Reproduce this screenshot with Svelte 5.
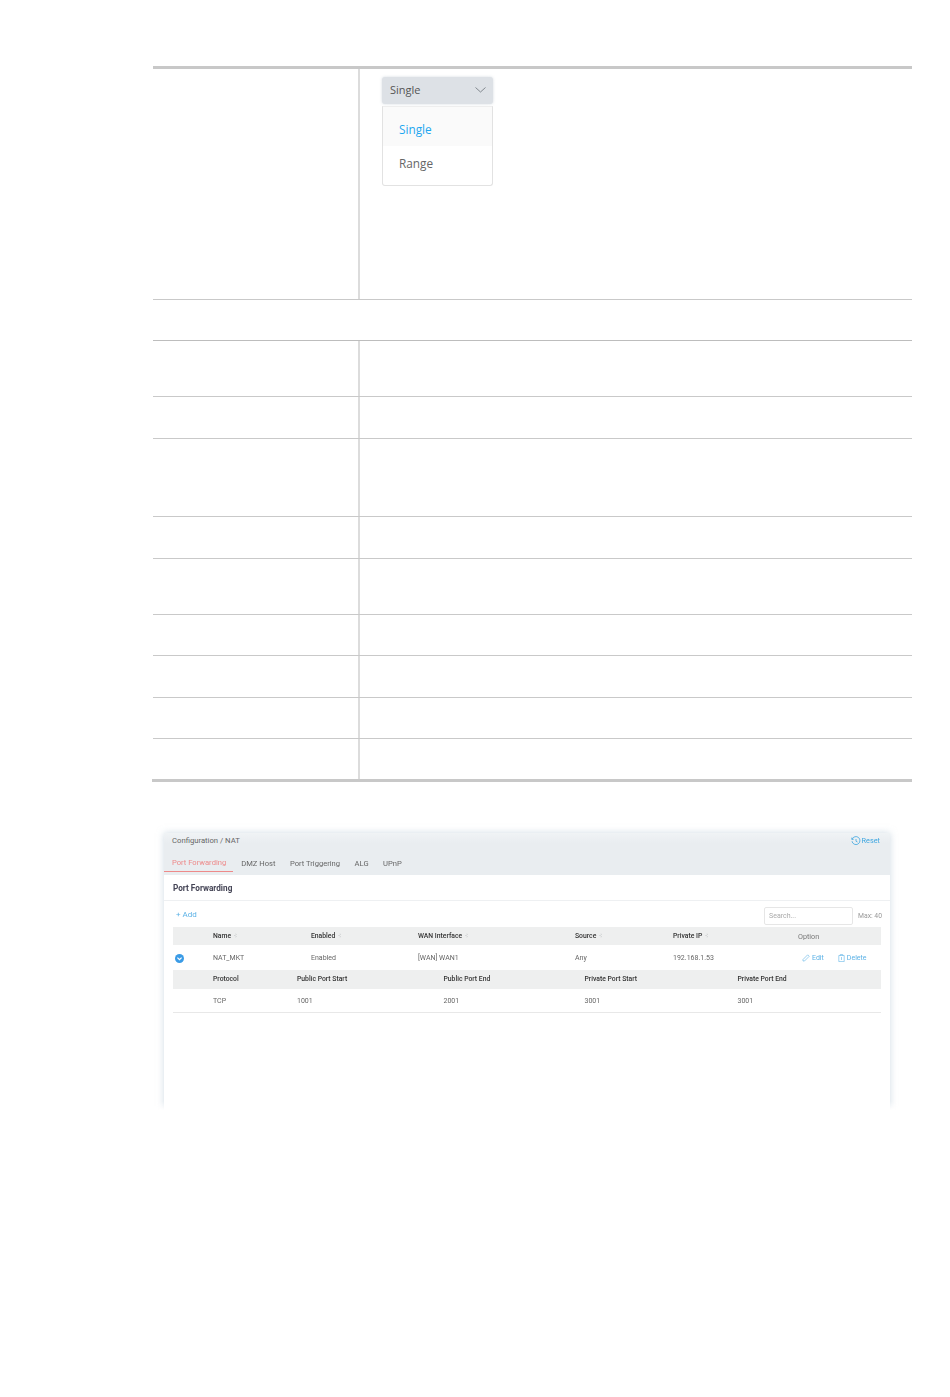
<script>
  const mainCols = [
    { key: 'name', label: 'Name', sort: true },
    { key: 'enabled', label: 'Enabled', sort: true },
    { key: 'wan', label: 'WAN Interface', sort: true },
    { key: 'source', label: 'Source', sort: true },
    { key: 'ip', label: 'Private IP', sort: true },
    { key: 'option', label: 'Option', sort: false }
  ];
  const rule = { name: 'NAT_MKT', enabled: 'Enabled', wan: '[WAN] WAN1', source: 'Any', ip: '192.168.1.53' };
  const subCols = ['Protocol', 'Public Port Start', 'Public Port End', 'Private Port Start', 'Private Port End'];
  const subRow = ['TCP', '1001', '2001', '3001', '3001'];
  const tabs = ['Port Forwarding', 'DMZ Host', 'Port Triggering', 'ALG', 'UPnP'];
  // heights of the empty rows below the spanning row
  const rows = [56, 42, 78, 42, 56, 41, 42, 41, 43];
</script>

<div class="page">
  <div class="doc-table">
    <div class="row first">
      <div class="label"></div>
      <div class="value">
        <div class="select">
          <span>Single</span>
          <svg width="11" height="6" viewBox="0 0 11 6"><path d="M.5.5l5 4.5 5-4.5" fill="none" stroke="#6b7278" stroke-width=".8" /></svg>
        </div>
        <div class="menu">
          <div class="opt active">Single</div>
          <div class="opt">Range</div>
        </div>
      </div>
    </div>
    <div class="span-row"></div>
    {#each rows as h, i}
      <div class="row" class:last={i === rows.length - 1} style="height: {h}px">
        <div class="label"></div>
        <div class="value"></div>
      </div>
    {/each}
  </div>

  <div class="shot">
    <div class="card">
      <div class="head">
        <div class="crumbs">
          <span>Configuration / NAT</span>
          <span class="reset">
            <svg width="10" height="10" viewBox="0 0 10 10" fill="none" stroke="#3ea6e0" stroke-width=".8"><path d="M1.2 3.2A4 4 0 1 1 1 5.2" /><path d="M.8 1.6v1.8h1.8" /><path d="M5 3v2.2l1.5.8" /></svg>
            Reset
          </span>
        </div>
        <div class="tabs">
          {#each tabs as t, i}
            <span class="tab" class:on={i === 0}>{t}</span>
          {/each}
        </div>
      </div>
      <div class="body">
        <div class="title">Port Forwarding</div>
        <div class="tools">
          <span class="add">+ Add</span>
          <div class="search-wrap">
            <div class="search">Search...</div>
            <span class="max">Max: 40</span>
          </div>
        </div>
        <div class="grid main th">
          <span></span>
          {#each mainCols as c}
            <span class:plain={!c.sort}>{c.label}{#if c.sort}<i class="sort"></i>{/if}</span>
          {/each}
          <span></span>
        </div>
        <div class="grid main td">
          <span class="toggle">
            <svg width="9" height="9" viewBox="0 0 9 9"><circle cx="4.5" cy="4.5" r="4.5" fill="#3a9be6" /><path d="M2.4 3.6l2.1 2 2.1-2" fill="none" stroke="#fff" stroke-width="1.2" /></svg>
          </span>
          <span>{rule.name}</span>
          <span>{rule.enabled}</span>
          <span>{rule.wan}</span>
          <span>{rule.source}</span>
          <span>{rule.ip}</span>
          <span class="actions">
            <span class="action">
              <svg width="8" height="8" viewBox="0 0 8 8" fill="none" stroke="#5cb2e6" stroke-width=".6"><path d="M1 5.5L5.7.8l1.5 1.5L2.5 7H1z" /></svg>Edit
            </span>
            <span class="action">
              <svg width="7" height="8" viewBox="0 0 7 8" fill="none" stroke="#5cb2e6" stroke-width=".6"><path d="M.8 1.5h5.4V7.6H.8zM2.3 1.5V.5h2.4v1M3.5 3v3" /></svg>Delete
            </span>
          </span>
          <span></span>
        </div>
        <div class="grid sub th">
          <span></span>
          {#each subCols as c}<span>{c}</span>{/each}
        </div>
        <div class="grid sub td bottom">
          <span></span>
          {#each subRow as v}<span>{v}</span>{/each}
        </div>
      </div>
    </div>
  </div>
</div>

<style>
  :global(body) {
    margin: 0;
    background: #fff;
  }

  .page {
    width: 950px;
    height: 1397px;
    box-sizing: border-box;
    padding: 66px 38px 0 153px;
    overflow: hidden;
    font-family: "Open Sans", sans-serif;
  }

  .doc-table {
    border-top: 3px solid #c8c8c8;
  }

  .row {
    display: grid;
    grid-template-columns: 207px 1fr;
    border-bottom: 1px solid #c9c9c9;
    box-sizing: border-box;
  }

  .row.first {
    height: 231px;
  }

  .row.last {
    grid-template-columns: 208px 1fr;
    border-bottom: 3px solid #c8c8c8;
    margin-left: -1px;
  }

  .span-row {
    height: 40px;
    border-bottom: 1px solid #bdbdbd;
  }

  .label {
    border-right: 2px solid #dcdcdc;
  }

  .value {
    padding: 8px 0 0 22px;
  }

  .select {
    width: 111px;
    height: 27px;
    box-sizing: border-box;
    padding: 0 7px 2px 8px;
    display: flex;
    align-items: center;
    justify-content: space-between;
    background: #dde1e6;
    border-radius: 3px;
    box-shadow: 0 0 3px rgba(150, 165, 180, 0.4);
    font-size: 11px;
    color: #555;
  }

  .menu {
    width: 111px;
    height: 80px;
    margin-top: 2px;
    box-sizing: border-box;
    border: 1px solid #e2e2e2;
    border-top: 1px solid #eee;
    border-radius: 0 0 3px 3px;
    background: #fff;
    font-size: 11.8px;
    color: #666;
  }

  .opt {
    height: 34px;
    padding-left: 16px;
    display: flex;
    align-items: center;
    box-sizing: border-box;
  }

  .opt.active {
    height: 39px;
    padding-top: 4px;
    background: #fafafa;
    color: #1ea7f0;
  }

  .shot {
    margin: 37px 0 0 -8px;
    width: 754px;
    height: 291px;
    padding: 14px 11px 0 19px;
    box-sizing: border-box;
    overflow: hidden;
    -webkit-mask-image: linear-gradient(to bottom, #000 97%, transparent 100%);
    mask-image: linear-gradient(to bottom, #000 97%, transparent 100%);
  }

  .card {
    width: 726px;
    height: 320px;
    background: #fff;
    box-shadow: 0 0 7px rgba(170, 190, 205, 0.55);
    font-family: Roboto, "Liberation Sans", sans-serif;
    font-size: 7px;
    color: #555;
    filter: blur(0.25px);
  }

  .head {
    height: 42px;
    background: linear-gradient(to bottom, #f0f3f5 0, #e9edf0 10px);
    box-sizing: border-box;
  }

  .crumbs {
    display: flex;
    justify-content: space-between;
    padding: 0 10px 0 8px;
    height: 15px;
    align-items: center;
    font-size: 7.7px;
    color: #666;
  }

  .reset {
    display: flex;
    align-items: center;
    gap: 1px;
    font-size: 7.3px;
    color: #3ea6e0;
  }

  .tabs {
    display: flex;
    gap: 14.5px;
    height: 20px;
    margin-top: 5px;
    align-items: center;
    font-size: 7.6px;
    color: #666;
  }

  .tab.on {
    color: #ee8a8a;
    padding: 4px 7px 4px 8px;
    margin-right: -6.5px;
    border-bottom: 1px solid #ee8a8a;
  }

  .body {
    padding: 0 9px;
  }

  .title {
    height: 26px;
    margin: 0 -9px;
    padding-left: 9px;
    display: flex;
    align-items: center;
    font-weight: 700;
    font-size: 8.2px;
    color: #445;
    border-bottom: 1px solid #eef0f2;
    box-sizing: border-box;
  }

  .tools {
    height: 26px;
    display: flex;
    align-items: center;
    justify-content: space-between;
    padding-left: 3px;
  }

  .add {
    color: #5cb2e6;
    font-size: 8px;
    margin-top: 1px;
  }

  .search-wrap {
    display: flex;
    align-items: center;
    gap: 5px;
    padding-top: 3px;
  }

  .search {
    width: 89px;
    height: 18px;
    box-sizing: border-box;
    padding-left: 4px;
    display: flex;
    align-items: center;
    border: 1px solid #e6e6e6;
    border-radius: 2px;
    color: #aaa;
  }

  .max {
    color: #999;
    font-size: 6.8px;
    margin-right: -1px;
  }

  .grid {
    display: grid;
    align-items: center;
    box-sizing: border-box;
  }

  .main {
    grid-template-columns: 40px 98px 107px 157px 98px 125px 84px 0;
  }

  .sub {
    grid-template-columns: 40px 84px 146.5px 141px 153px 1fr;
  }

  .th {
    background: #eeefef;
    color: #333;
    font-size: 6.8px;
    font-weight: 500;
  }

  .main.th {
    height: 18px;
  }

  .main.td {
    height: 25px;
    padding-top: 1px;
  }

  .sub.th {
    height: 19px;
    padding-bottom: 1px;
  }

  .sub.td {
    height: 24px;
    padding-top: 1px;
  }

  .td {
    color: #666;
  }

  .bottom {
    border-bottom: 1px solid #e8e8e8;
  }

  .plain {
    font-weight: 400;
    font-size: 7.2px;
    color: #777;
    padding-top: 1px;
  }

  .sort {
    display: inline-block;
    width: 3px;
    height: 5px;
    margin-left: 3px;
    background: #d3d5d6;
    clip-path: polygon(50% 0, 100% 40%, 0 40%, 0 60%, 100% 60%, 50% 100%);
  }

  .toggle {
    padding-left: 2px;
    display: flex;
  }

  .actions {
    display: flex;
    gap: 14px;
    padding-left: 4px;
    white-space: nowrap;
    color: #5cb2e6;
    margin-top: -1px;
  }

  .action {
    display: flex;
    align-items: center;
    gap: 2px;
  }
</style>
